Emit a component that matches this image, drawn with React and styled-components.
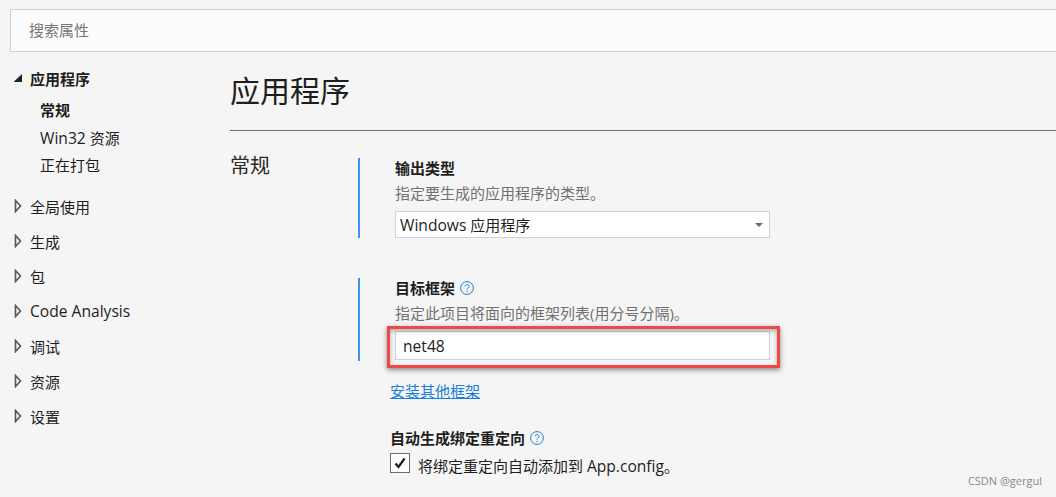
import React from "react";
import styled, { createGlobalStyle } from "styled-components";

const Global = createGlobalStyle`
  html, body { margin: 0; padding: 0; background: #f5f5f5; overflow: hidden; }
  body { font-family: "Open Sans", "Noto Sans CJK SC", sans-serif; color: #1e1e1e; }
`;

const Page = styled.div`
  position: relative;
  width: 1056px;
  height: 497px;
  overflow: hidden;
  padding-top: 9px;
  box-sizing: border-box;
`;

const Latin = styled.span`
  font-size: 15.6px;
`;

const SearchBox = styled.div`
  margin-left: 10px;
  height: 43px;
  box-sizing: border-box;
  width: 1060px;
  border: 1px solid #cfcfdc;
  background: #fcfcfc;
  display: flex;
  align-items: center;
  padding: 0 0 2px 18px;
  font-size: 15px;
  color: #767676;
`;

const Body = styled.div`
  display: flex;
`;

const Sidebar = styled.nav`
  width: 230px;
  flex: none;
  padding-top: 13px;
  font-size: 15px;
`;

const TreeRow = styled.div`
  display: flex;
  align-items: center;
  height: 35px;
  padding-left: 14px;
`;

const ExpandedRow = styled(TreeRow)`
  height: 26px;
  font-weight: 700;
`;

const Arrow = styled.svg`
  width: 8px;
  height: 14px;
  margin-right: 8px;
  flex: none;
`;

const SubList = styled.div`
  padding: 6px 0 9px 40px;
  display: flex;
  flex-direction: column;
`;

const SubItem = styled.div`
  height: 27.5px;
  line-height: 27.5px;
  font-weight: ${(p) => (p.$active ? 700 : 400)};
`;

const Main = styled.main`
  flex: 1;
  min-width: 0;
`;

const Title = styled.h1`
  margin: 0;
  padding-top: 14px;
  font-size: 30px;
  font-weight: 400;
  line-height: 50px;
  color: #1e1e1e;
  box-sizing: border-box;
  height: 79px;
  border-bottom: 1px solid #6f6f6f;
`;

const Section = styled.section`
  display: flex;
  padding-top: 27px;
`;

const SectionName = styled.div`
  width: 128px;
  flex: none;
  font-size: 20px;
  line-height: 16px;
  color: #2a2a2a;
`;

const Fields = styled.div`
  display: flex;
  flex-direction: column;
`;

const Group = styled.div`
  border-left: 2px solid #3b92f0;
  padding-left: 35px;
  height: ${(p) => p.$h}px;
  margin-bottom: ${(p) => p.$mb || 0}px;
  box-sizing: border-box;
`;

const Label = styled.div`
  display: flex;
  align-items: center;
  gap: 5px;
  font-size: 15px;
  font-weight: 700;
  line-height: 20px;
  color: #1e1e1e;
`;

const Hint = styled.div`
  font-size: 15px;
  line-height: 20px;
  margin-top: 5px;
  color: #717171;
`;

const Dropdown = styled.div`
  margin-top: 8px;
  width: 375px;
  height: 27px;
  box-sizing: border-box;
  border: 1px solid #cfcfdc;
  background: #fff;
  display: flex;
  align-items: center;
  justify-content: space-between;
  padding: 0 6px 0 4px;
  font-size: 15px;
`;

const Caret = styled.span`
  width: 0;
  height: 0;
  border-left: 4px solid transparent;
  border-right: 4px solid transparent;
  border-top: 4px solid #6a6a6a;
`;

const InputWrap = styled.div`
  position: relative;
  margin-top: 8px;
  width: 375px;
`;

const Input = styled.div`
  height: 29px;
  box-sizing: border-box;
  border: 1px solid #cfcfdc;
  background: #fff;
  display: flex;
  align-items: center;
  padding-left: 7px;
  font-size: 15px;
`;

const Highlight = styled.div`
  position: absolute;
  left: -8px;
  top: -5px;
  width: 393px;
  height: 42px;
  box-sizing: border-box;
  border: 3px solid #f04848;
  box-shadow: 0 2px 5px rgba(0, 0, 0, 0.45), inset 0 2px 4px rgba(0, 0, 0, 0.3);
  pointer-events: none;
`;

const Extra = styled.div`
  margin-left: 32px;
`;

const Link = styled.a`
  display: block;
  margin-top: 20px;
  font-size: 15px;
  line-height: 20px;
  color: #1a7fd4;
  text-decoration: underline;
`;

const ExtraLabel = styled(Label)`
  margin-top: 27px;
`;

const CheckRow = styled.div`
  display: flex;
  align-items: flex-start;
  gap: 8px;
  margin-top: 5px;
  font-size: 15px;
  line-height: 26px;
`;

const CheckBox = styled.span`
  width: 20px;
  height: 20px;
  box-sizing: border-box;
  border: 1px solid #6e6e6e;
  background: #fff;
  display: flex;
  align-items: center;
  justify-content: center;
  flex: none;
`;

const Watermark = styled.div`
  position: absolute;
  right: 14px;
  top: 473px;
  font-size: 11px;
  line-height: 15px;
  color: #8a8a8a;
`;

const Right = () => (
  <Arrow viewBox="0 0 8 14">
    <path d="M1.5 1.5 L6.5 7 L1.5 12.5 Z" fill="#f5f5f5" stroke="#555" strokeWidth="1.6" />
  </Arrow>
);

const Down = () => (
  <Arrow viewBox="0 0 8 14">
    <path d="M-0.5 11 L8 11 L8 3 Z" fill="#222" />
  </Arrow>
);

const Help = () => (
  <svg width="14" height="14" viewBox="0 0 14 14" fill="none" stroke="#1a7fd4">
    <circle cx="7" cy="7" r="6.4" strokeWidth="1" />
    <path d="M5 5.4 C5 2.9 9 2.9 9 5.4 C9 7 7 6.8 7 8.6" strokeWidth="1" />
    <circle cx="7" cy="10.4" r="0.7" fill="#1a7fd4" stroke="none" />
  </svg>
);

const closed = ["全局使用", "生成", "包", <Latin>Code Analysis</Latin>, "调试", "资源", "设置"];

export default function App() {
  return (
    <Page>
      <Global />
      <SearchBox>搜索属性</SearchBox>
      <Body>
        <Sidebar>
          <ExpandedRow>
            <Down />
            应用程序
          </ExpandedRow>
          <SubList>
            <SubItem $active>常规</SubItem>
            <SubItem><Latin>Win32</Latin> 资源</SubItem>
            <SubItem>正在打包</SubItem>
          </SubList>
          {closed.map((t, i) => (
            <TreeRow key={i}>
              <Right />
              {t}
            </TreeRow>
          ))}
        </Sidebar>
        <Main>
          <Title>应用程序</Title>
          <Section>
            <SectionName>常规</SectionName>
            <Fields>
              <Group $h={80} $mb={40}>
                <Label>输出类型</Label>
                <Hint>指定要生成的应用程序的类型。</Hint>
                <Dropdown>
                  <span><Latin>Windows</Latin> 应用程序</span>
                  <Caret />
                </Dropdown>
              </Group>
              <Group $h={83}>
                <Label>
                  目标框架
                  <Help />
                </Label>
                <Hint>指定此项目将面向的框架列表(用分号分隔)。</Hint>
                <InputWrap>
                  <Input><Latin>net48</Latin></Input>
                  <Highlight />
                </InputWrap>
              </Group>
              <Extra>
                <Link>安装其他框架</Link>
                <ExtraLabel>
                  自动生成绑定重定向
                  <Help />
                </ExtraLabel>
                <CheckRow>
                  <CheckBox>
                    <svg width="14" height="14" viewBox="0 0 14 14">
                      <path d="M2.5 7.5 L5.5 11 L11.5 2.5" fill="none" stroke="#1e1e1e" strokeWidth="2.2" />
                    </svg>
                  </CheckBox>
                  <span>将绑定重定向自动添加到 <Latin>App.config</Latin>。</span>
                </CheckRow>
              </Extra>
            </Fields>
          </Section>
        </Main>
      </Body>
      <Watermark>CSDN @gergul</Watermark>
    </Page>
  );
}
